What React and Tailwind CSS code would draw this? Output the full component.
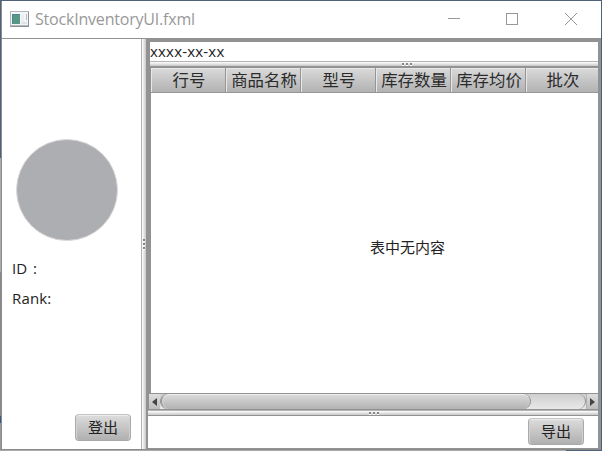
import React from "react";

const columns = ["行号", "商品名称", "型号", "库存数量", "库存均价", "批次"];

function Grip({ vertical }) {
  return (
    <div className={vertical ? "flex flex-col gap-[2px]" : "flex gap-[2px]"}>
      {[0, 1, 2].map((i) => (
        <span key={i} className="block h-[2px] w-[2px] bg-[#858585] shadow-[0_1px_0_#fff]" />
      ))}
    </div>
  );
}

function HorizontalDivider({ className }) {
  return (
    <div
      className={`flex shrink-0 justify-center border-t border-[#b4b4b4] bg-linear-to-b from-white to-[#c8c8c8] pt-[1px] ${className}`}
    >
      <Grip />
    </div>
  );
}

function Button({ children }) {
  return (
    <button className="h-[27px] w-[56px] shrink-0 rounded-[4px] border border-[#a9a9a9] border-t-[#c4c4c4] bg-linear-to-b from-[#dcdcdc] to-[#b0b0b0] pb-[2px] text-[15px] leading-[22px] text-[#222] shadow-[inset_0_1px_0_#ececec,inset_1px_0_0_#d4d4d4,inset_-1px_0_0_#d0d0d0]">
      {children}
    </button>
  );
}

function TitleBar() {
  return (
    <header className="flex h-[37px] shrink-0 items-center bg-white pl-[8px] pb-[2px] text-[#999]">
      <svg width="20" height="16" viewBox="0 0 20 16" shapeRendering="crispEdges">
        <rect x="0.5" y="0.5" width="18" height="14" fill="#f4f5f6" stroke="#b3b7ba" />
        <path d="M0 15.5H19M18.5 1V15" stroke="#8e9295" />
        <rect x="2" y="3" width="8" height="10" fill="#579784" />
        <path d="M2 3H10V4H3V13H2Z" fill="#4d8496" />
        <rect x="11" y="3" width="3" height="10" fill="#eceff1" />
        <rect x="16" y="3" width="1" height="6" fill="#a4c3cd" />
        <rect x="12" y="11" width="5" height="2" fill="#dfe2e4" />
      </svg>
      <span className="ml-[5px] h-[22px] w-[170px] whitespace-nowrap text-[16px] leading-[22px] tracking-[-0.2px]">
        StockInventoryUI.fxml
      </span>
      <svg className="ml-auto mr-[20px]" width="134" height="14" fill="none" stroke="#999">
        <path d="M1 6.5H13" />
        <rect x="59.5" y="1.5" width="11" height="11" />
        <path d="M118 1L130 13M130 1L118 13" />
      </svg>
    </header>
  );
}

function SidePanel() {
  return (
    <aside className="flex w-[139px] shrink-0 flex-col bg-white pt-[100px] pl-[10px] text-[15px] text-[#222]">
      <div className="ml-[4px] h-[102px] w-[102px] rounded-full border border-[#ded9d8] bg-[#adaeb2]" />
      <div className="mt-[17px] flex h-[20px] gap-[6px] leading-[20px]">
        <span>ID</span>
        <span>:</span>
      </div>
      <div className="mt-[10px] h-[20px] leading-[20px] tracking-[0.15px]">Rank:</div>
      <div className="mt-auto mr-[10px] mb-[8px] flex justify-end">
        <Button>登出</Button>
      </div>
    </aside>
  );
}

function ScrollBar() {
  return (
    <div className="flex h-[17px] shrink-0 border-y border-[#929292] bg-linear-to-b from-[#cfcfcf] to-[#e8e8e8]">
      <div className="flex w-[11px] items-center justify-center bg-linear-to-b from-[#dedede] to-[#bdbdbd]">
        <svg width="5" height="8">
          <path d="M5 0V8L0 4Z" fill="#444" />
        </svg>
      </div>
      <div className="flex flex-1 rounded-[8px] border-x border-[#929292]">
        <div className="w-[370px] rounded-[8px] border-x border-[#8e8e8e] bg-linear-to-b from-[#dcdcdc] to-[#b2b2b2] shadow-[inset_0_1px_0_#eee,inset_1px_0_0_#ddd,inset_-1px_0_0_#ccc]" />
      </div>
      <div className="flex w-[12px] items-center justify-center border-l border-[#b0b0b0] bg-linear-to-b from-[#dedede] to-[#bdbdbd]">
        <svg width="5" height="8">
          <path d="M0 0V8L5 4Z" fill="#444" />
        </svg>
      </div>
    </div>
  );
}

function StockTable() {
  return (
    <section className="flex h-[343px] shrink-0 flex-col bg-[#929292] pt-[1px]">
      <div className="ml-[3px] flex h-[25px] shrink-0">
        {columns.map((name) => (
          <div
            key={name}
            className="w-[75px] shrink-0 overflow-hidden whitespace-nowrap border-r border-b border-[#959595] bg-linear-to-b from-[#dadada] to-[#b2b2b2] pl-[2px] text-center text-[16.4px] leading-[24px] text-[#2b2b2b] shadow-[inset_1px_1px_0_#e8e8e8] last:w-[72px] last:border-r-0"
          >
            {name}
          </div>
        ))}
      </div>
      <div className="ml-[3px] flex min-h-0 flex-1 justify-center bg-white pt-[143px] text-[15px] leading-[22px] text-[#222]">
        <span className="ml-[66px] h-[22px]">表中无内容</span>
      </div>
      <div className="ml-[1px]">
        <ScrollBar />
      </div>
    </section>
  );
}

export default function App() {
  return (
    <div className="flex h-[451px] w-[602px] flex-col overflow-hidden border-t border-r border-[#4e627c] bg-white font-['Open_Sans','Noto_Sans_CJK_SC',sans-serif]">
      <div className="flex min-h-0 flex-1">
        <div className="flex w-[1px] shrink-0 flex-col bg-[#4e627c]">
          <div className="mt-[157px] h-[114px] bg-[#aaa]" />
          <div className="h-[144px] bg-[#888]" />
          <div className="h-[7px] bg-[#35558c]" />
          <div className="flex-1 bg-[#999]" />
        </div>
        <div className="flex min-w-0 flex-1 flex-col border-l border-[#8c8c8c]">
          <TitleBar />
          <main className="flex min-h-0 flex-1 border-t border-r border-[#929292]">
            <SidePanel />
            <div className="flex w-[5px] shrink-0 items-center justify-center border-l border-[#b4b4b4] bg-linear-to-r from-white to-[#c8c8c8]">
              <Grip vertical />
            </div>
            <div className="flex min-w-0 flex-1 flex-col border-t-[3px] border-r-2 border-l-2 border-[#929292] bg-white">
              <div className="h-[19px] shrink-0 border-l-2 border-[#929292] text-[15px] leading-[19px] tracking-[0.2px] text-[#222]">
                xxxx-xx-xx
              </div>
              <div className="shrink-0 border-l-2 border-b border-[#929292]">
                <HorizontalDivider className="h-[5px] pl-[66px]" />
              </div>
              <StockTable />
              <HorizontalDivider className="h-[5px] pl-[2px]" />
              <div className="flex min-h-0 flex-1 justify-end border-t border-[#929292] pt-[2px] pr-[14px]">
                <Button>导出</Button>
              </div>
              <div className="h-[1px] shrink-0 bg-[#929292]" />
            </div>
          </main>
        </div>
      </div>
      <div className="flex h-[2px] shrink-0 border-t border-[#8c8c8c]">
        <div className="w-[566px] bg-[#aaa]" />
        <div className="flex-1 bg-[#4e627c]" />
      </div>
    </div>
  );
}
